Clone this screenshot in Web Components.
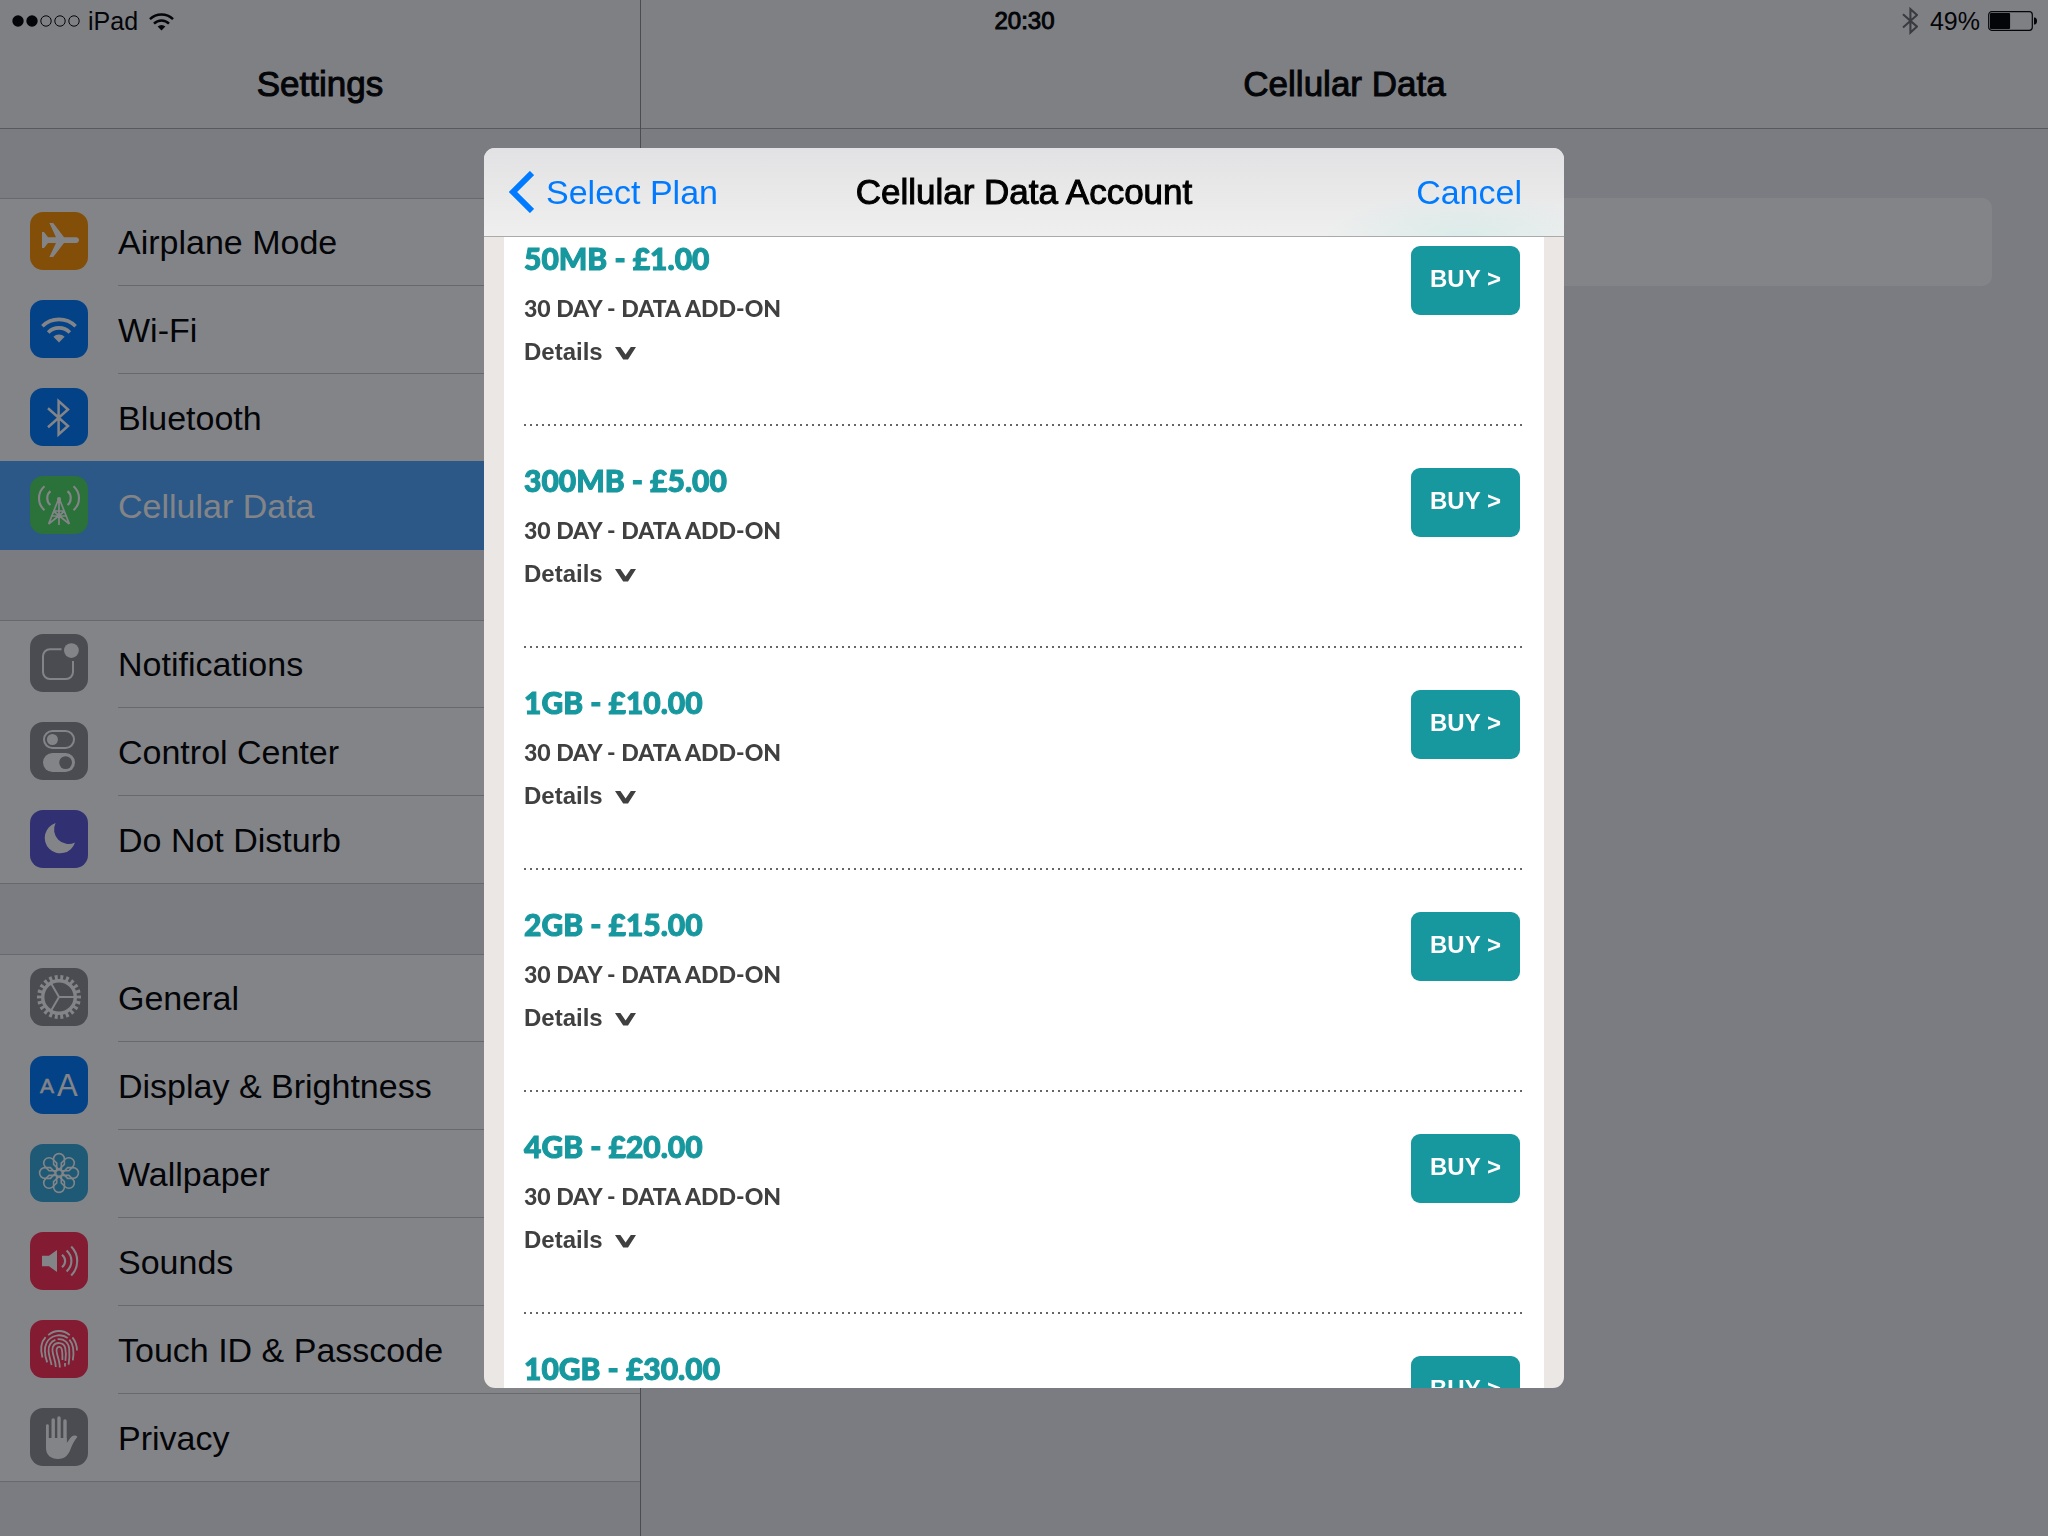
<!DOCTYPE html>
<html lang="en">
<head>
<meta charset="utf-8">
<meta name="viewport" content="width=device-width, initial-scale=1">
<title>Settings</title>
<style>
  html, body {
    margin: 0;
    height: 100%;
    overflow: hidden;
  }
  body {
    font-family: "Liberation Sans", Arial, sans-serif;
    font-size: 34px;
    color: #000;
    background: #efeff4;
  }
</style>
</head>
<body>

<settings-app>
  <status-bar slot="status" carrier="iPad" time="20:30" battery="49"></status-bar>

  <settings-group slot="menu">
    <settings-row icon="airplane" color="#ff9500">Airplane Mode</settings-row>
    <settings-row icon="wifi" color="#007aff">Wi-Fi</settings-row>
    <settings-row icon="bluetooth" color="#007aff">Bluetooth</settings-row>
    <settings-row icon="cellular" color="#4cd964" selected>Cellular Data</settings-row>
  </settings-group>
  <settings-group slot="menu">
    <settings-row icon="notifications" color="#8e8e93">Notifications</settings-row>
    <settings-row icon="control" color="#8e8e93">Control Center</settings-row>
    <settings-row icon="moon" color="#5856d6">Do Not Disturb</settings-row>
  </settings-group>
  <settings-group slot="menu">
    <settings-row icon="gear" color="#8e8e93">General</settings-row>
    <settings-row icon="display" color="#007aff">Display &amp; Brightness</settings-row>
    <settings-row icon="wallpaper" color="#34aadc">Wallpaper</settings-row>
    <settings-row icon="sounds" color="#ff2d55">Sounds</settings-row>
    <settings-row icon="touch" color="#ff2d55">Touch ID &amp; Passcode</settings-row>
    <settings-row icon="hand" color="#8e8e93">Privacy</settings-row>
  </settings-group>
</settings-app>

<account-sheet heading="Cellular Data Account" back="Select Plan">
  <data-plan name="50MB - £1.00"></data-plan>
  <data-plan name="300MB - £5.00"></data-plan>
  <data-plan name="1GB - £10.00"></data-plan>
  <data-plan name="2GB - £15.00"></data-plan>
  <data-plan name="4GB - £20.00"></data-plan>
  <data-plan name="10GB - £30.00"></data-plan>
</account-sheet>

<script>
const WIFI = `
  <g fill="none" stroke="currentColor" stroke-width="3.6">
    <path d="M12.4 26.2A23.6 23.6 0 0 1 45.6 26.2"/>
    <path d="M18.2 32.4A15.2 15.2 0 0 1 39.8 32.4"/>
  </g>
  <path fill="currentColor" d="M29 42.6L23.4 36.8A8 8 0 0 1 34.6 36.8Z"/>`;

const BLUETOOTH = `
  <path fill="none" stroke="currentColor" d="M18 20.3L38 38L28.6 46.5V13L38 21.5L18 39.2"/>`;

// Glyphs are drawn on a 58x58 tile
const ICONS = {
  wifi: WIFI,
  bluetooth: `<g stroke-width="2.5">${BLUETOOTH}</g>`,
  airplane: `
    <path fill="currentColor" d="M12 20H14L18 25.2H26L19.4 11H23.2L34 25.2H46C48 25.2 49 26.6 49 28.1S48 31 46 31H34L23.2 45H19.4L26 31H18L14 36H12Z"/>`,
  cellular: `
    <g fill="none" stroke="currentColor" stroke-width="2.1">
      <path d="M20.5 15.2C16.2 18.5 16.2 25.8 20.5 29M37.5 15.2C41.8 18.5 41.8 25.8 37.5 29"/>
      <path d="M14.5 10.3C7.2 16.5 7.2 28 14.5 34.2M43.5 10.3C50.8 16.5 50.8 28 43.5 34.2"/>
    </g>
    <g fill="none" stroke="currentColor" stroke-width="1.7">
      <path d="M29 23V49M28.6 23L18.6 48M29.4 23L39.4 48M24.5 35H33.5M22.5 40H35.5M18.6 48L33.5 36M39.4 48L24.5 36"/>
    </g>
    <circle cx="29" cy="23" r="2" fill="currentColor"/>`,
  notifications: `
    <path fill="none" stroke="currentColor" stroke-width="2" d="M31.5 15.2H20A7 7 0 0 0 13 22.2V38A7 7 0 0 0 20 45H36A7 7 0 0 0 43 38V27"/>
    <circle cx="41.4" cy="16.6" r="7.4" fill="currentColor"/>`,
  control: `
    <rect x="14" y="9" width="30" height="17" rx="8.5" fill="none" stroke="currentColor" stroke-width="2"/>
    <circle cx="22.4" cy="17.5" r="5.5" fill="currentColor"/>
    <rect x="13" y="31" width="32" height="19" rx="9.5" fill="currentColor"/>
    <circle cx="35.6" cy="40.6" r="6.4" fill="#8e8e93"/>`,
  moon: `
    <path fill="currentColor" d="M25.6 13A15.5 15.5 0 1 0 45 32.5A14.5 14.5 0 0 1 25.6 13Z"/>`,
  gear: `
    <g fill="none" stroke="currentColor">
      <circle cx="29" cy="29" r="16.3" stroke-width="3.4"/>
      <circle cx="29" cy="29" r="19.6" stroke-width="4.8" pathLength="44" stroke-dasharray="1.04 .96" stroke-dashoffset=".52"/>
      <path stroke-width="2" d="M29 29H45M29 29L21 15.2M29 29L21 42.8"/>
    </g>`,
  display: `
    <g fill="currentColor" font-family="Liberation Sans, Arial, sans-serif">
      <text x="10" y="37" font-size="21" stroke="currentColor" stroke-width=".5">A</text>
      <text x="27" y="40" font-size="31">A</text>
    </g>`,
  wallpaper: `
    <g fill="none" stroke="currentColor" stroke-width="1.6">
      ${[0, 45, 90, 135, 180, 225, 270, 315].map((a) => `<path transform="rotate(${a} 29 29)" d="M29 25.6L23.6 20.4V15A5.4 5.4 0 1 1 34.4 15V20.4Z"/>`).join('')}
      <circle cx="29" cy="29" r="3.4"/>
    </g>`,
  sounds: `
    <path fill="currentColor" d="M12 23.7H19L27 18V40L19 34.2H12Z"/>
    <path fill="none" stroke="currentColor" stroke-width="2.1" d="M32 22.8C36.2 26.5 36.2 31.5 32 35.2M36.6 18.6C43 24.5 43 33.5 36.6 39.4M41.2 14.5C49.2 22.5 49.2 35.5 41.2 43.5"/>`,
  touch: `
    <g fill="none" stroke="currentColor" stroke-width="1.8">
      <path d="M18.2 15.2C24.5 9.6 33.5 9.6 39.8 15.2"/>
      <path d="M15.6 17.2C11 22.2 10.2 29.5 12.4 37.4M42.4 17.4C45.2 21 46.9 25 47 30.4"/>
      <path d="M17.2 42.4C14.6 35 13.9 28 16.6 22.8C20.2 15.8 30.5 12.6 37.8 18M39.4 19.6C43.6 24.5 44.4 31 42.8 40.4"/>
      <path d="M21.6 45C19.8 37 16.6 29.4 20.2 24C21.4 22 23.2 20.6 25.4 19.8M27.6 19.2C34 18.4 38.6 22.6 39.2 28.6C39.6 34 39.6 39 38.6 44.6"/>
      <path d="M25.8 47C25.6 38.5 20.6 31.8 23 26.6C25.4 21.6 33.8 21.6 35.2 28C36.2 32.6 36 36.8 35.4 40.8M35 43V46.6"/>
      <path d="M29.8 47.6C30 39.5 25.2 32.6 26.8 28.6C28 25.8 31.2 26.4 31.8 29.4C32.8 34 32.4 37.4 32.4 40"/>
    </g>`,
  hand: `
    <path fill="currentColor" d="M16 30V40C16 47 21 51 28 51C35 51 38.4 47 40.6 41C42 37 44.4 32.6 47.4 28.8C45.2 26 41 27.6 38.6 32.6L36.7 35V30Z"/>
    <g stroke="currentColor" stroke-linecap="round">
      <path stroke-width="2.8" d="M17.4 17.6V34"/>
      <path stroke-width="3.4" d="M23.2 12V34M29 10V34M35 13V34"/>
    </g>`
};

/* Builds the shadow root of an element from a markup string */
function attach(element, markup) {
  const template = document.createElement('template');
  template.innerHTML = markup;
  element.attachShadow({ mode: 'open' }).appendChild(template.content.cloneNode(true));
}

class StatusBar extends HTMLElement {
  connectedCallback() {
    const level = Number(this.getAttribute('battery'));
    attach(this, `
      <style>
        :host {
          display: grid;
          grid-template-columns: 1fr auto 1fr;
          align-items: center;
          height: 42px;
          padding: 0 11px 0 12px;
          box-sizing: border-box;
          font-size: 25px;
        }
        .side { display: flex; align-items: center; }
        .left { gap: 8px; }
        .right { justify-content: flex-end; gap: 8px; }
        .wifi { margin-left: 3px; }
        .bt { color: #6d6d72; margin-right: 4px; stroke-width: 3px; }
        .time { font-size: 24px; -webkit-text-stroke: 1px currentColor; }
        svg { display: block; }
      </style>
      <div class="side left">
        <svg width="68" height="12" viewBox="0 0 68 12" fill="none" stroke="currentColor">
          <g fill="currentColor" stroke="none"><circle cx="6" cy="6" r="5.7"/><circle cx="20" cy="6" r="5.7"/></g>
          <circle cx="34" cy="6" r="5.2"/><circle cx="48" cy="6" r="5.2"/><circle cx="62" cy="6" r="5.2"/>
        </svg>
        <span>${this.getAttribute('carrier')}</span>
        <svg class="wifi" width="25" height="19" viewBox="11 16 36 27">${WIFI}</svg>
      </div>
      <span class="time">${this.getAttribute('time')}</span>
      <div class="side right">
        <svg class="bt" width="16" height="28" viewBox="17 10 22 40">${BLUETOOTH}</svg>
        <span>${level}%</span>
        <svg width="49" height="20" viewBox="0 0 49 20">
          <rect x=".7" y=".7" width="43.6" height="18.6" rx="3" fill="none" stroke="currentColor" stroke-width="1.2"/>
          <rect x="2" y="2" width="${41 * level / 100}" height="16" rx="1" fill="currentColor"/>
          <path fill="currentColor" d="M46 6.5C48.6 6.5 49 8.4 49 10S48.6 13.5 46 13.5Z"/>
        </svg>
      </div>
    `);
  }
}

class SettingsRow extends HTMLElement {
  connectedCallback() {
    attach(this, `
      <style>
        :host { display: block; }
        a {
          display: flex;
          height: 88px;
          color: inherit;
          text-decoration: none;
        }
        svg {
          flex: none;
          width: 58px;
          height: 58px;
          margin: 14px 30px;
          border-radius: 13px;
          background: ${this.getAttribute('color')};
          color: #fff;
        }
        .label {
          flex: 1;
          display: flex;
          align-items: center;
          padding-top: 2px;
          border-bottom: 1px solid #c8c7cc;
        }
        :host(:last-child) .label { border-color: transparent; }
        /* covers the separator of the row above */
        :host([selected]) {
          position: relative;
          margin-top: -1px;
          padding-top: 1px;
          background: #4ea6ff;
          color: #fff;
        }
      </style>
      <a href="#${this.getAttribute('icon')}">
        <svg viewBox="0 0 58 58" aria-hidden="true">${ICONS[this.getAttribute('icon')]}</svg>
        <span class="label"><slot></slot></span>
      </a>
    `);
  }
}

class SettingsGroup extends HTMLElement {
  connectedCallback() {
    attach(this, `
      <style>
        :host {
          display: block;
          background: #fff;
          box-shadow: inset 0 1px #c8c7cc, inset 0 -1px #c8c7cc;
        }
      </style>
      <slot></slot>
    `);
  }
}

class SettingsApp extends HTMLElement {
  connectedCallback() {
    attach(this, `
      <style>
        :host {
          display: block;
          position: relative;
          height: 100%;
        }
        /* the status bar floats over both columns */
        .status {
          position: absolute;
          top: 0;
          left: 0;
          right: 0;
        }
        .columns {
          display: grid;
          grid-template-columns: 641px 1fr;
          height: 100%;
        }
        section { overflow: hidden; }
        .sidebar { border-right: 1px solid #8e8e93; }
        header {
          height: 129px;
          padding-top: 42px;
          box-sizing: border-box;
          background: #f7f7f8;
          border-bottom: 1px solid #a8a8ac;
        }
        h1 {
          margin: 0;
          font-size: 35px;
          font-weight: 400;
          line-height: 84px;
          text-align: center;
          -webkit-text-stroke: 1px currentColor;
        }
        .menu {
          display: flex;
          flex-direction: column;
          gap: 70px;
          padding-top: 69px;
        }
        .card {
          height: 88px;
          margin: 69px 56px;
          border-radius: 10px;
          background: #fff;
        }
      </style>
      <div class="status"><slot name="status"></slot></div>
      <div class="columns">
        <section class="sidebar">
          <header><h1>Settings</h1></header>
          <nav class="menu"><slot name="menu"></slot></nav>
        </section>
        <section>
          <header><h1>Cellular Data</h1></header>
          <div class="card"></div>
        </section>
      </div>
    `);
  }
}

class DataPlan extends HTMLElement {
  connectedCallback() {
    attach(this, `
      <style>
        :host {
          display: flex;
          justify-content: space-between;
          align-items: flex-start;
          height: 222px;
          box-sizing: border-box;
          padding-top: 34px;
          color: #404040;
          background: repeating-linear-gradient(to right, #666 0 2px, transparent 2px 6px) bottom / 100% 2px no-repeat;
        }
        h3, p {
          margin: 0;
          font-family: Lato, sans-serif;
          font-weight: 900;
        }
        h3 {
          margin-bottom: 14px;
          font-size: 30px;
          line-height: 40px;
          color: #17979e;
          -webkit-text-stroke: 1px currentColor;
        }
        p {
          margin-bottom: 12px;
          font-size: 23px;
          line-height: 32px;
        }
        button {
          border: 0;
          font: bold 24px/32px "Liberation Sans", Arial, sans-serif;
          color: inherit;
          cursor: pointer;
        }
        .details {
          display: flex;
          align-items: center;
          gap: 12px;
          padding: 0;
          background: none;
        }
        .details svg { margin-top: 3px; }
        .buy {
          width: 109px;
          margin: 8px 4px 0 0;
          padding: 17px 0 20px;
          border-radius: 9px;
          background: #17979e;
          color: #fff;
        }
      </style>
      <div>
        <h3>${this.getAttribute('name')}</h3>
        <p>30 DAY - DATA ADD-ON</p>
        <button class="details" type="button" aria-expanded="false">
          Details
          <svg width="21" height="13" viewBox="0 0 21 13"><path fill="currentColor" d="M0 0H5.4L10.6 7.4L15.8 0H21L13 12.6H8.2Z"/></svg>
        </button>
      </div>
      <button class="buy" type="button">BUY &gt;</button>
    `);
  }
}

class AccountSheet extends HTMLElement {
  connectedCallback() {
    attach(this, `
      <style>
        :host {
          position: fixed;
          inset: 0;
          display: flex;
          justify-content: center;
          padding: 148px 0;
          background: rgba(8, 10, 16, .5);
        }
        .sheet {
          display: flex;
          flex-direction: column;
          width: 100%;
          max-width: 1080px;
          border-radius: 11px;
          overflow: hidden;
          background: #ebe7e4;
        }
        header {
          flex: none;
          display: grid;
          grid-template-columns: 1fr auto 1fr;
          align-items: center;
          height: 89px;
          box-sizing: border-box;
          padding: 0 24px;
          border-bottom: 1px solid #aaaaad;
          background:
            radial-gradient(ellipse 140px 44px at 980px 100%, rgba(190, 232, 226, .4), transparent),
            linear-gradient(#e2e2e4, #efefef);
        }
        h2 {
          margin: 0;
          font-size: 35px;
          font-weight: 400;
          -webkit-text-stroke: 1px currentColor;
        }
        button {
          display: flex;
          align-items: center;
          gap: 12px;
          padding: 0;
          border: 0;
          background: none;
          font: inherit;
          color: #007aff;
          cursor: pointer;
        }
        .cancel {
          justify-self: end;
          margin-right: 18px;
        }
        .scroll {
          flex: 1;
          min-height: 0;
          overflow: hidden;
          margin: 0 20px;
          padding: 0 20px;
          background: #fff;
        }
        /* list is scrolled a little under the bar */
        .plans { margin-top: -33px; }
      </style>
      <div class="sheet" role="dialog" aria-label="${this.getAttribute('heading')}">
        <header>
          <button class="back" type="button">
            <svg width="26" height="42" viewBox="0 0 26 42"><path fill="none" stroke="currentColor" stroke-width="6" d="M24 2L5 21L24 40"/></svg>
            ${this.getAttribute('back')}
          </button>
          <h2>${this.getAttribute('heading')}</h2>
          <button class="cancel" type="button">Cancel</button>
        </header>
        <div class="scroll"><div class="plans"><slot></slot></div></div>
      </div>
    `);
  }
}

customElements.define('status-bar', StatusBar);
customElements.define('settings-row', SettingsRow);
customElements.define('settings-group', SettingsGroup);
customElements.define('settings-app', SettingsApp);
customElements.define('data-plan', DataPlan);
customElements.define('account-sheet', AccountSheet);
</script>
</body>
</html>
